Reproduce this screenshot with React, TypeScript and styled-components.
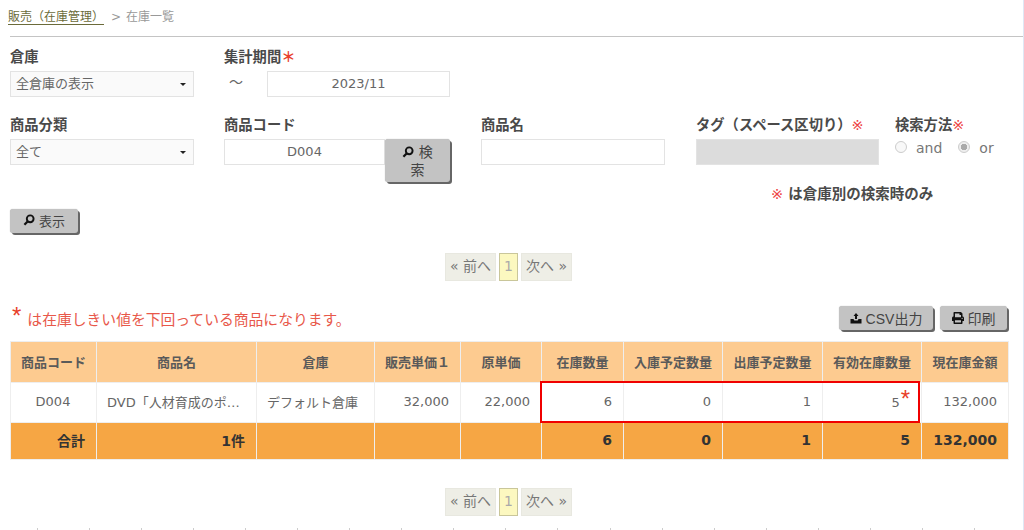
import React from 'react';
import styled, { createGlobalStyle } from 'styled-components';
import { FaPrint } from 'react-icons/fa';

const GlobalStyle = createGlobalStyle`
  html, body {
    margin: 0;
    padding: 0;
    background: #fff;
  }
  body {
    font-family: "DejaVu Sans", "Noto Sans CJK JP", sans-serif;
    font-size: 13px;
    color: #555;
    overflow: hidden;
  }
`;

const Page = styled.div`
  width: 1024px;
  height: 530px;
  box-sizing: border-box;
  padding: 10px 0 0 10px;
  border-right: 1px solid #dfe8f5;
  overflow: hidden;
`;

const Breadcrumb = styled.div`
  display: flex;
  align-items: flex-start;
  height: 26px;
  margin-left: -2px;
  font-size: 12px;
  line-height: 14px;
  color: #999;
`;

const CrumbLink = styled.span`
  color: #6b6b3a;
  border-bottom: 1px solid #6b6b3a;
  margin-right: 7px;
`;

const CrumbArrow = styled.span`
  margin-right: 5px;
`;

const Rule = styled.div`
  height: 1px;
  background: #c4c4c4;
  margin-bottom: 13px;
`;

const FormRow = styled.div<{ $height: number }>`
  display: flex;
  height: ${(p) => p.$height}px;
`;

const Field = styled.div<{ $width: number }>`
  width: ${(p) => p.$width}px;
  flex: none;
`;

const Label = styled.div`
  font-weight: 700;
  font-size: 14.3px;
  line-height: 14px;
  height: 21px;
  color: #4a4a4a;
  white-space: nowrap;
`;

const Required = styled.span`
  color: #e8402a;
  font-weight: 700;
`;

const Kome = styled.span`
  color: #ee4444;
  font-weight: 400;
`;

const FieldBody = styled.div`
  display: flex;
  align-items: flex-start;
`;

const SelectBox = styled.div`
  width: 184px;
  height: 26px;
  box-sizing: border-box;
  border: 1px solid #e3e3e3;
  background: #fafafa;
  display: flex;
  align-items: center;
  justify-content: space-between;
  padding: 0 7px 4px 5px;
  font-size: 13px;
  color: #666;
`;

const Caret = styled.span`
  width: 0;
  height: 0;
  margin-top: 4px;
  border-left: 3px solid transparent;
  border-right: 3px solid transparent;
  border-top: 3px solid #222;
`;

const TextBox = styled.div<{ $width: number; $disabled?: boolean }>`
  width: ${(p) => p.$width}px;
  height: 26px;
  flex: none;
  box-sizing: border-box;
  border: 1px solid #e3e3e3;
  background: ${(p) => (p.$disabled ? '#dcdcdc' : '#fff')};
  text-align: center;
  line-height: 23px;
  font-size: 13px;
  color: #666;
`;

const Tilde = styled.span`
  width: 43px;
  padding-left: 5px;
  box-sizing: border-box;
  font-size: 14px;
  line-height: 22px;
  color: #666;
`;

const GrayButton = styled.button`
  font-family: inherit;
  font-size: 13px;
  color: #444;
  background: #c3c3c3;
  border: 0;
  border-radius: 3px;
  box-shadow: 2px 2px 0 #666, 0 0 1px #aaa;
  padding: 0;
  display: inline-flex;
  align-items: center;
  justify-content: center;
  gap: 4px;
`;

const SearchButton = styled(GrayButton)`
  width: 65px;
  height: 43px;
  font-size: 14px;
  line-height: 18px;
  display: block;
  text-align: center;
  flex: none;
  padding: 0 12px;
`;

const ShowButton = styled(GrayButton)`
  width: 68px;
  height: 24px;
  padding-bottom: 2px;
`;

const CsvButton = styled(GrayButton)`
  width: 94px;
  height: 24px;
  font-family: "Liberation Sans", "Noto Sans CJK JP", sans-serif;
  font-size: 14px;
`;

const PrintButton = styled(GrayButton)`
  width: 67px;
  height: 24px;
  font-size: 14px;
`;

const RadioRow = styled.div`
  display: flex;
  align-items: center;
  height: 18px;
  font-size: 14px;
  color: #777;
`;

const Radio = styled.span<{ $checked?: boolean }>`
  width: 12px;
  height: 12px;
  box-sizing: border-box;
  border: 1px solid #ccc;
  border-radius: 50%;
  background: ${(p) => (p.$checked ? 'radial-gradient(circle, #aaa 0 3px, #eee 3.5px)' : '#f8f8f8')};
  margin-right: 9px;
  margin-top: -3px;
`;

const RadioLabel = styled.span`
  margin-right: 16px;
`;

const Note = styled.div`
  padding-left: 761px;
  height: 23px;
  font-weight: 700;
  font-size: 14.5px;
  line-height: 16px;
  color: #4a4a4a;
`;

const ShowRow = styled.div`
  height: 44px;
`;

const Pager = styled.div<{ $height: number }>`
  display: flex;
  justify-content: center;
  gap: 3px;
  height: ${(p) => p.$height}px;
  padding-right: 16px;
`;

const PageItem = styled.span<{ $current?: boolean }>`
  height: 28px;
  box-sizing: border-box;
  line-height: 24px;
  padding: 0 4px;
  font-size: 14px;
  color: ${(p) => (p.$current ? '#aaa' : '#777')};
  background: ${(p) => (p.$current ? '#fcf8c0' : '#eeeee6')};
  border: 1px solid ${(p) => (p.$current ? '#c9c69a' : '#e8e8e0')};
`;

const ListHead = styled.div`
  display: flex;
  align-items: flex-end;
  justify-content: space-between;
  height: 56px;
  padding-right: 16px;
  margin-bottom: 4px;
`;

const Warning = styled.div`
  color: #e8584a;
  font-size: 14.8px;
  line-height: 20px;
  padding-bottom: 7px;
  padding-left: 2px;
`;

const Star = styled.span`
  color: #e8402a;
  font-size: 24px;
  line-height: 14px;
  margin-right: 6px;
  vertical-align: 1px;
  font-family: "Liberation Sans", sans-serif;
`;

const HeadButtons = styled.div`
  display: flex;
  gap: 7px;
  padding-bottom: 7px;
`;

const TableWrap = styled.div`
  position: relative;
  width: 998px;
  margin-bottom: 28px;
`;

const Table = styled.table`
  width: 998px;
  border-collapse: collapse;
  table-layout: fixed;
  font-size: 13px;
`;

const HeadCell = styled.th`
  height: 38px;
  padding: 0 0 2px;
  background: #fdcb90;
  border: 1px solid #eeeeee;
  font-size: 13px;
  font-weight: 700;
  color: #5a5a5a;
  text-align: center;
`;

const BodyCell = styled.td<{ $align?: string }>`
  height: 37px;
  padding: 0 11px 2px 10px;
  background: #fff;
  border: 1px solid #eeeeee;
  text-align: ${(p) => p.$align || 'right'};
  color: #666;
  white-space: nowrap;
`;

const TotalCell = styled.td`
  height: 34px;
  padding: 0 11px 2px 10px;
  background: #f6a644;
  border: 1px solid #eee;
  text-align: right;
  font-weight: 700;
  font-size: 14px;
  color: #333;
`;

const CellStar = styled.span`
  color: #e8402a;
  font-size: 24px;
  line-height: 10px;
  position: relative;
  top: 0;
  margin-left: 1px;
  font-family: "Liberation Sans", sans-serif;
`;

const Highlight = styled.div`
  position: absolute;
  left: 530px;
  top: 40px;
  width: 380px;
  height: 42px;
  box-sizing: border-box;
  border: 2px solid #f00000;
  pointer-events: none;
`;

const Ticks = styled.div`
  display: flex;
  justify-content: space-between;
  height: 3px;
  margin: 0 0 0 27px;
  width: 990px;
`;

const Tick = styled.span`
  width: 1px;
  height: 3px;
  background: #ccc;
`;

const SearchIcon = () => (
  <svg width="12" height="12" viewBox="0 0 12 12" style={{ verticalAlign: '-1px' }}>
    <circle cx="7.2" cy="4.8" r="3.4" fill="none" stroke="#111" strokeWidth="1.9" />
    <path d="M4.6 7.4 1.4 10.8" stroke="#111" strokeWidth="2.2" />
  </svg>
);

const ExportIcon = () => (
  <svg width="12" height="12" viewBox="0 0 12 12">
    <path d="M0.5 7h3l.8 1.5h3.4L8.5 7h3v4.5H.5z" fill="#111" />
    <path d="M6 1 8.5 4H7v3H5V4H3.5z" fill="#111" />
  </svg>
);

const columns = [
  ['商品コード', 86],
  ['商品名', 160],
  ['倉庫', 118],
  ['販売単価１', 86],
  ['原単価', 81],
  ['在庫数量', 82],
  ['入庫予定数量', 99],
  ['出庫予定数量', 100],
  ['有効在庫数量', 99],
  ['現在庫金額', 87],
] as const;

const PagerItems = ({ height }: { height: number }) => (
  <Pager $height={height}>
    <PageItem>« 前へ</PageItem>
    <PageItem $current>1</PageItem>
    <PageItem>次へ »</PageItem>
  </Pager>
);

const App: React.FC = () => {
  return (
    <Page>
      <GlobalStyle />
      <Breadcrumb>
        <CrumbLink>販売（在庫管理）</CrumbLink>
        <CrumbArrow>&gt;</CrumbArrow>在庫一覧
      </Breadcrumb>
      <Rule />

      <FormRow $height={68}>
        <Field $width={214}>
          <Label>倉庫</Label>
          <SelectBox>
            全倉庫の表示
            <Caret />
          </SelectBox>
        </Field>
        <Field $width={300}>
          <Label>
            集計期間<Required>＊</Required>
          </Label>
          <FieldBody>
            <Tilde>〜</Tilde>
            <TextBox $width={183}>2023/11</TextBox>
          </FieldBody>
        </Field>
      </FormRow>

      <FormRow $height={68}>
        <Field $width={214}>
          <Label>商品分類</Label>
          <SelectBox>
            全て
            <Caret />
          </SelectBox>
        </Field>
        <Field $width={257}>
          <Label>商品コード</Label>
          <FieldBody>
            <TextBox $width={161}>D004</TextBox>
            <SearchButton>
              <SearchIcon /> 検索
            </SearchButton>
          </FieldBody>
        </Field>
        <Field $width={215}>
          <Label>商品名</Label>
          <TextBox $width={184} />
        </Field>
        <Field $width={199}>
          <Label>
            タグ（スペース区切り）<Kome>※</Kome>
          </Label>
          <TextBox $width={183} $disabled />
        </Field>
        <Field $width={120}>
          <Label>
            検索方法<Kome>※</Kome>
          </Label>
          <RadioRow>
            <Radio />
            <RadioLabel>and</RadioLabel>
            <Radio $checked />
            or
          </RadioRow>
        </Field>
      </FormRow>

      <Note>
        <Kome>※</Kome> は倉庫別の検索時のみ
      </Note>
      <ShowRow>
        <ShowButton>
          <SearchIcon /> 表示
        </ShowButton>
      </ShowRow>

      <PagerItems height={28} />

      <ListHead>
        <Warning>
          <Star>*</Star>は在庫しきい値を下回っている商品になります。
        </Warning>
        <HeadButtons>
          <CsvButton>
            <ExportIcon /> CSV出力
          </CsvButton>
          <PrintButton>
            <FaPrint size={12} color="#111" /> 印刷
          </PrintButton>
        </HeadButtons>
      </ListHead>

      <TableWrap>
        <Table>
          <colgroup>
            {columns.map(([name, width]) => (
              <col key={name} style={{ width }} />
            ))}
          </colgroup>
          <thead>
            <tr>
              {columns.map(([name]) => (
                <HeadCell key={name}>{name}</HeadCell>
              ))}
            </tr>
          </thead>
          <tbody>
            <tr>
              <BodyCell $align="center">D004</BodyCell>
              <BodyCell $align="left">DVD「人材育成のポ…</BodyCell>
              <BodyCell $align="left">デフォルト倉庫</BodyCell>
              <BodyCell>32,000</BodyCell>
              <BodyCell>22,000</BodyCell>
              <BodyCell>6</BodyCell>
              <BodyCell>0</BodyCell>
              <BodyCell>1</BodyCell>
              <BodyCell>
                5<CellStar>*</CellStar>
              </BodyCell>
              <BodyCell>132,000</BodyCell>
            </tr>
            <tr>
              <TotalCell>合計</TotalCell>
              <TotalCell>1件</TotalCell>
              <TotalCell />
              <TotalCell />
              <TotalCell />
              <TotalCell>6</TotalCell>
              <TotalCell>0</TotalCell>
              <TotalCell>1</TotalCell>
              <TotalCell>5</TotalCell>
              <TotalCell>132,000</TotalCell>
            </tr>
          </tbody>
        </Table>
        <Highlight />
      </TableWrap>

      <PagerItems height={40} />
      <Ticks>
        {Array.from({ length: 20 }, (_, i) => (
          <Tick key={i} />
        ))}
      </Ticks>
    </Page>
  );
};

export default App;
